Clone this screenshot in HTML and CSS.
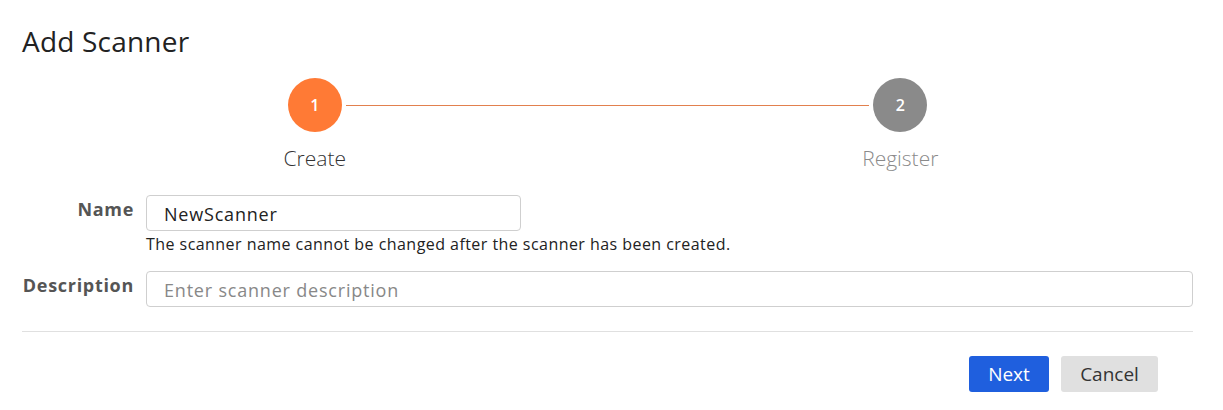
FILE: index.html
```html
<!DOCTYPE html>
<html lang="en">
<head>
<meta charset="utf-8">
<title>Add Scanner</title>
<link rel="stylesheet" href="styles.css">
</head>
<body>
<div class="page">
  <h1 class="title">Add Scanner</h1>
  <div class="stepper">
    <div class="track">
      <span class="pad"></span>
      <span class="circle active">1</span>
      <span class="line"></span>
      <span class="circle">2</span>
      <span class="pad"></span>
    </div>
    <div class="labels">
      <span class="step-label active">Create</span>
      <span class="step-label">Register</span>
    </div>
  </div>
  <form class="form">
    <div class="row">
      <label class="label" for="name">Name</label>
      <div class="field">
        <input class="input input-name" id="name" type="text" value="NewScanner">
        <div class="help">The scanner name cannot be changed after the scanner has been created.</div>
      </div>
    </div>
    <div class="row">
      <label class="label" for="desc">Description</label>
      <div class="field">
        <input class="input" id="desc" type="text" placeholder="Enter scanner description">
      </div>
    </div>
  </form>
  <hr class="divider">
  <div class="actions">
    <button class="btn btn-primary" type="button">Next</button>
    <button class="btn btn-secondary" type="button">Cancel</button>
  </div>
</div>
</body>
</html>
```
FILE: styles.css
```css
* { box-sizing: border-box; }
html, body { margin: 0; padding: 0; background: #fff; }
body {
  font-family: "Open Sans", "Noto Sans", "Liberation Sans", sans-serif;
  color: #222;
}
.page {
  padding: 22px 30px 0 22px;
}
.title {
  margin: 0;
  font-size: 28px;
  letter-spacing: 0.2px;
  font-weight: 400;
  line-height: 38px;
  color: #222;
}
.stepper {
  margin-top: 18px;
}
.track {
  display: grid;
  grid-template-columns: 1fr 54px 2fr 54px 1fr;
  align-items: center;
}
.circle {
  width: 54px;
  height: 54px;
  border-radius: 50%;
  background: #8a8a8a;
  color: #fff;
  font-size: 16px;
  font-weight: 600;
  display: flex;
  align-items: center;
  justify-content: center;
}
.circle.active { background: #ff7a35; }
.line {
  height: 1px;
  margin: 0 4px;
  background: #e2804e;
}
.labels {
  display: grid;
  grid-template-columns: 1fr 1fr;
  margin-top: 10px;
}
.step-label {
  text-align: center;
  font-size: 21px;
  font-weight: 300;
  line-height: 32px;
  color: #8a8a8a;
}
.step-label.active { color: #333; }
.form {
  margin-top: 21px;
}
.row {
  display: grid;
  grid-template-columns: 112px 1fr;
  column-gap: 12px;
}
.row + .row { margin-top: 16px; }
.label {
  text-align: right;
  font-size: 18px;
  letter-spacing: 0.7px;
  font-weight: 700;
  color: #555;
  line-height: 24px;
  padding-top: 2px;
  white-space: nowrap;
}
.input {
  display: block;
  width: 100%;
  height: 36px;
  border: 1px solid #cfcfcf;
  border-radius: 4px;
  padding: 2px 17px 0 17px;
  font-family: inherit;
  font-size: 18px;
  letter-spacing: 0.8px;
  color: #222;
  background: #fff;
  outline: none;
}
.input::placeholder { color: #888; }
.input-name { width: 375px; }
.help {
  font-size: 16px;
  letter-spacing: 0.45px;
  line-height: 22px;
  margin-top: 2px;
  color: #222;
  white-space: nowrap;
}
.divider {
  margin: 24px 0 0 0;
  border: 0;
  border-top: 1px solid #e0e0e0;
  height: 0;
}
.actions {
  display: flex;
  justify-content: flex-end;
  gap: 12px;
  margin-top: 24px;
  padding-right: 35px;
}
.btn {
  height: 36px;
  border: 0;
  border-radius: 3px;
  font-family: inherit;
  font-size: 19px;
  padding: 0 18px;
  cursor: pointer;
}
.btn-primary { background: #1f5fde; color: #fff; width: 80px; }
.btn-secondary { background: #e0e0e0; color: #333; width: 97px; }
```
